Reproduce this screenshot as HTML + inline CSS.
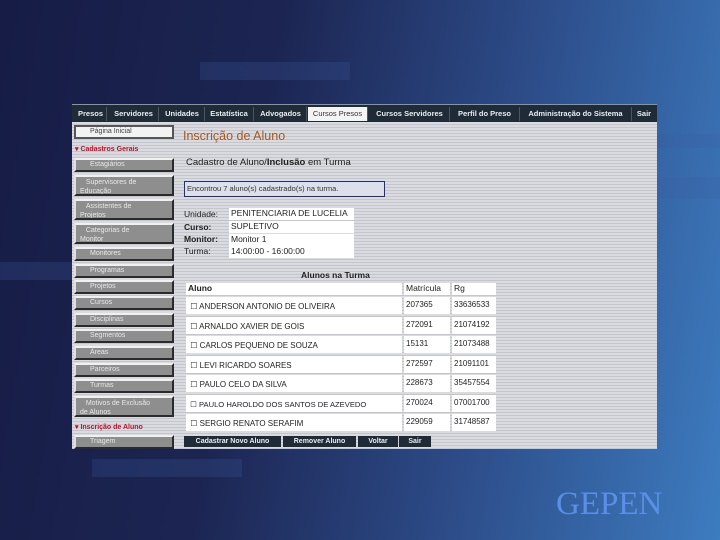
<!DOCTYPE html>
<html><head><meta charset="utf-8"><style>
*{margin:0;padding:0;box-sizing:border-box}
body{width:720px;height:540px;overflow:hidden;position:relative;font-family:"Liberation Sans",sans-serif;
background:linear-gradient(100deg,#161c45 0%,#1c2552 35%,#2c4a86 65%,#3d7cc0 100%);}
.band{position:absolute;background:rgba(60,90,160,.25)}
.shot{position:absolute;left:72px;top:104px;width:585px;height:345px;background:repeating-linear-gradient(180deg,#dadbe0 0,#dadbe0 2px,#c4c6cc 2px,#c4c6cc 3px);overflow:hidden}
.nav{position:absolute;left:0;top:0;width:585px;height:18px;background:#1f2b36;border-top:1px solid #8a94a0}
.nav span{position:absolute;top:2px;height:14px;color:#e8eef2;font-size:7.5px;font-weight:bold;line-height:14px;text-align:center;border-right:1px solid #4a5660}
.nav span.on{background:#f4f4f4;color:#333;font-weight:normal}
.b{position:absolute;left:2px;width:100px;background:#8e8e8e;border:2px solid #2a2a2a;border-top-color:#f0f0f0;border-left-color:#e0e0e0;color:#e8e8e8;font-size:7px;padding-left:14px;line-height:10px;overflow:hidden}
.b2{padding-left:4px;line-height:9px;padding-top:1px}
.r{position:absolute;left:3px;color:#c0102a;font-size:7px;font-weight:bold}
.t{position:absolute;font-size:8px;color:#222;white-space:nowrap}
.c{position:absolute;background:#fff;font-size:8px;color:#222;white-space:nowrap;overflow:hidden;padding-left:2px}
.btn{position:absolute;top:332px;height:11px;background:#1f2b36;color:#e8eef2;font-size:7px;font-weight:bold;text-align:center;line-height:11px}
</style></head><body>
<div class="band" style="left:200px;top:62px;width:150px;height:18px"></div>
<div class="band" style="left:0;top:262px;width:72px;height:18px"></div>
<div class="band" style="left:657px;top:177px;width:63px;height:22px"></div>
<div class="band" style="left:657px;top:134px;width:63px;height:14px"></div>
<div class="band" style="left:92px;top:459px;width:150px;height:18px"></div>
<div class="shot">
<div class="nav">
<span style="left:3px;width:32px">Presos</span>
<span style="left:37px;width:50px">Servidores</span>
<span style="left:88px;width:45px">Unidades</span>
<span style="left:133px;width:49px">Estatística</span>
<span style="left:183px;width:52px">Advogados</span>
<span class="on" style="left:236px;width:60px">Cursos Presos</span>
<span style="left:298px;width:80px">Cursos Servidores</span>
<span style="left:378px;width:70px">Perfil do Preso</span>
<span style="left:448px;width:112px">Administração do Sistema</span>
<span style="left:561px;width:22px;border:none">Sair</span>
</div>
<div class="b" style="top:21px;height:14px;background:#f2f2f2;color:#444;border-color:#555">Página Inicial</div>
<div class="r" style="top:41px">▾ Cadastros Gerais</div>
<div class="b" style="top:54px;height:14px">Estagiários</div>
<div class="b b2" style="top:71px;height:21px">&nbsp;&nbsp;&nbsp;Supervisores de<br>Educação</div>
<div class="b b2" style="top:95px;height:21px">&nbsp;&nbsp;&nbsp;Assistentes de<br>Projetos</div>
<div class="b b2" style="top:119px;height:21px">&nbsp;&nbsp;&nbsp;Categorias de<br>Monitor</div>
<div class="b" style="top:143px;height:14px">Monitores</div>
<div class="b" style="top:160px;height:14px">Programas</div>
<div class="b" style="top:176px;height:14px">Projetos</div>
<div class="b" style="top:192px;height:14px">Cursos</div>
<div class="b" style="top:209px;height:14px">Disciplinas</div>
<div class="b" style="top:225px;height:14px">Segmentos</div>
<div class="b" style="top:242px;height:14px">Áreas</div>
<div class="b" style="top:259px;height:14px">Parceiros</div>
<div class="b" style="top:275px;height:14px">Turmas</div>
<div class="b b2" style="top:292px;height:21px">&nbsp;&nbsp;&nbsp;Motivos de Exclusão<br>de Alunos</div>
<div class="r" style="top:319px">▾ Inscrição de Aluno</div>
<div class="b" style="top:331px;height:14px">Triagem</div>

<div style="position:absolute;left:111px;top:25px;font-size:12.5px;color:#a05a28">Inscrição de Aluno</div>
<div class="t" style="left:114px;top:53px;font-size:9.5px">Cadastro de Aluno/<b>Inclusão</b> em Turma</div>
<div style="position:absolute;left:112px;top:77px;width:201px;height:16px;border:1px solid #2a2f6a;font-size:7.5px;color:#333;line-height:14px;padding-left:2px;background:#dde0ea;white-space:nowrap;overflow:hidden">Encontrou 7 aluno(s) cadastrado(s) na turma.</div>

<div class="t" style="left:112px;top:105px;font-size:8.5px">Unidade:</div>
<div class="t" style="left:112px;top:118px;font-size:8.5px;font-weight:bold">Curso:</div>
<div class="t" style="left:112px;top:130px;font-size:8.5px;font-weight:bold">Monitor:</div>
<div class="t" style="left:112px;top:142px;font-size:8.5px">Turma:</div>
<div class="c" style="left:157px;top:104px;width:125px;height:12px;font-size:8.5px">PENITENCIARIA DE LUCELIA</div>
<div class="c" style="left:157px;top:117px;width:125px;height:12px;font-size:8.5px">SUPLETIVO</div>
<div class="c" style="left:157px;top:130px;width:125px;height:12px;font-size:8.5px">Monitor 1</div>
<div class="c" style="left:157px;top:142px;width:125px;height:12px;font-size:8.5px">14:00:00 - 16:00:00</div>

<div class="t" style="left:229px;top:166px;font-weight:bold;font-size:8.5px">Alunos na Turma</div>
<div class="c" style="left:114px;top:179px;width:216px;height:12px;font-weight:bold;font-size:8.5px">Aluno</div>
<div class="c" style="left:332px;top:179px;width:46px;height:12px;font-size:8.5px">Matrícula</div>
<div class="c" style="left:380px;top:179px;width:44px;height:12px;font-size:8.5px">Rg</div>

<div class="c" style="left:114px;top:193px;width:216px;height:17px;line-height:19px">&nbsp;☐ ANDERSON ANTONIO DE OLIVEIRA</div><div class="c" style="left:332px;top:193px;width:46px;height:17px;line-height:15px">207365</div><div class="c" style="left:380px;top:193px;width:44px;height:17px;line-height:15px">33636533</div>
<div class="c" style="left:114px;top:213px;width:216px;height:17px;line-height:19px">&nbsp;☐ ARNALDO XAVIER DE GOIS</div><div class="c" style="left:332px;top:213px;width:46px;height:17px;line-height:15px">272091</div><div class="c" style="left:380px;top:213px;width:44px;height:17px;line-height:15px">21074192</div>
<div class="c" style="left:114px;top:232px;width:216px;height:17px;line-height:19px">&nbsp;☐ CARLOS PEQUENO DE SOUZA</div><div class="c" style="left:332px;top:232px;width:46px;height:17px;line-height:15px">15131</div><div class="c" style="left:380px;top:232px;width:44px;height:17px;line-height:15px">21073488</div>
<div class="c" style="left:114px;top:252px;width:216px;height:17px;line-height:19px">&nbsp;☐ LEVI RICARDO SOARES</div><div class="c" style="left:332px;top:252px;width:46px;height:17px;line-height:15px">272597</div><div class="c" style="left:380px;top:252px;width:44px;height:17px;line-height:15px">21091101</div>
<div class="c" style="left:114px;top:271px;width:216px;height:17px;line-height:19px">&nbsp;☐ PAULO CELO DA SILVA</div><div class="c" style="left:332px;top:271px;width:46px;height:17px;line-height:15px">228673</div><div class="c" style="left:380px;top:271px;width:44px;height:17px;line-height:15px">35457554</div>
<div class="c" style="left:114px;top:291px;width:216px;height:17px;line-height:19px;font-size:7.6px">&nbsp;☐ PAULO HAROLDO DOS SANTOS DE AZEVEDO</div><div class="c" style="left:332px;top:291px;width:46px;height:17px;line-height:15px">270024</div><div class="c" style="left:380px;top:291px;width:44px;height:17px;line-height:15px">07001700</div>
<div class="c" style="left:114px;top:310px;width:216px;height:17px;line-height:19px">&nbsp;☐ SERGIO RENATO SERAFIM</div><div class="c" style="left:332px;top:310px;width:46px;height:17px;line-height:15px">229059</div><div class="c" style="left:380px;top:310px;width:44px;height:17px;line-height:15px">31748587</div>

<div class="btn" style="left:112px;width:97px">Cadastrar Novo Aluno</div>
<div class="btn" style="left:211px;width:73px">Remover Aluno</div>
<div class="btn" style="left:286px;width:40px">Voltar</div>
<div class="btn" style="left:327px;width:32px">Sair</div>
</div>
<div style="position:absolute;left:556px;top:486px;font-family:'Liberation Serif',serif;font-size:33px;color:#5b8fe6">GEPEN</div>
</body></html>
